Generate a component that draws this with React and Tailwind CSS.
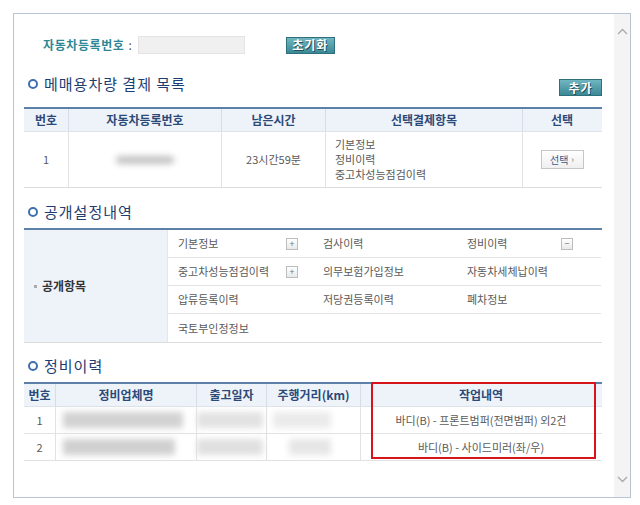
import React from 'react';

const FONT = "font-['Noto_Sans_CJK_KR','Liberation_Sans',sans-serif]";

const SectionTitle = ({ children }) => (
  <div className="flex items-center h-[20px]">
    <span className="w-[10px] h-[10px] rounded-full border-[2.5px] border-[#3f6fae] ml-[4px] mr-[6px]" />
    <span className="text-[15px] leading-[20px] tracking-[1px] text-[#1e3d70]">{children}</span>
  </div>
);

const TealButton = ({ children, className = '' }) => (
  <button
    className={`h-[17px] border border-[#2f6f7c] bg-gradient-to-b from-[#6fb6c1] to-[#3b8895] text-white text-[12px] font-bold leading-none tracking-[1px] [text-shadow:1px_1px_0_#1f4f58] ${className}`}
  >
    {children}
  </button>
);

const MiniBtn = ({ sign, className = '' }) => (
  <span className={`w-[12px] h-[12px] border border-[#bdbdbd] bg-gradient-to-b from-white to-[#e9e9e9] flex items-center justify-center text-[#777] text-[9px] leading-none ${className}`}>
    {sign}
  </span>
);

const Blob = ({ className }) => <div className={`blur-[3px] ${className}`} />;

export default function App() {
  return (
    <div className={`w-[640px] h-[505px] bg-white pt-[13px] pl-[13px] ${FONT}`}>
      <div className="w-[618px] h-[485px] border border-[#b9c4d3] flex">
        {/* content */}
        <div className="flex-1 pl-[10px] pr-[12px]">
          {/* 자동차등록번호 */}
          <div className="flex items-center h-[18px] mt-[22px]">
            <span className="ml-[19px] text-[12px] font-bold tracking-[0.6px] text-[#2e8795]">자동차등록번호</span>
            <span className="ml-[4px] text-[12px] text-[#555]">:</span>
            <div className="ml-[6px] w-[107px] h-[18px] bg-[#f0f0f0] border border-[#e4e4e4]" />
            <TealButton className="ml-[41px] w-[49px]">초기화</TealButton>
          </div>

          {/* 매매용차량 결제 목록 */}
          <div className="flex justify-between h-[22px] mt-[20px]">
            <div className="self-start"><SectionTitle>메매용차량 결제 목록</SectionTitle></div>
            <TealButton className="self-end w-[43px]">추가</TealButton>
          </div>
          <div className="mt-[11px] border-t-2 border-[#5d80a9] border-b border-b-[#dcdcdc]">
            <div className="grid grid-cols-[44px_153px_104px_197px_79px] h-[23px] bg-[#eef3fa] border-b border-[#dde3ea] text-[12px] font-bold text-[#2c4a77]">
              <div className="flex items-center justify-center">번호</div>
              <div className="flex items-center justify-center border-l border-[#d6dde7]">자동차등록번호</div>
              <div className="flex items-center justify-center border-l border-[#d6dde7]">남은시간</div>
              <div className="flex items-center justify-center border-l border-[#d6dde7]">선택결제항목</div>
              <div className="flex items-center justify-center border-l border-[#d6dde7]">선택</div>
            </div>
            <div className="grid grid-cols-[44px_153px_104px_197px_79px] h-[55px] text-[11px] text-[#5a5a5a]">
              <div className="flex items-center justify-center">1</div>
              <div className="flex items-center justify-center border-l border-[#e2e2e2]">
                <Blob className="w-[58px] h-[8px] rounded-full bg-[#c2c2c2]" />
              </div>
              <div className="flex items-center justify-center border-l border-[#e2e2e2]">23시간59분</div>
              <div className="flex flex-col justify-center pl-[9px] leading-[15px] border-l border-[#e2e2e2]">
                <span>기본정보</span>
                <span>정비이력</span>
                <span>중고차성능점검이력</span>
              </div>
              <div className="flex items-center justify-center border-l border-[#e2e2e2]">
                <span className="w-[43px] h-[19px] border border-[#c6c6c6] bg-gradient-to-b from-white to-[#efefef] flex items-center justify-center gap-[3px] text-[10px] text-[#3a5b8c]">
                  선택<span className="text-[9px] text-[#777]">›</span>
                </span>
              </div>
            </div>
          </div>

          {/* 공개설정내역 */}
          <div className="mt-[14px]"><SectionTitle>공개설정내역</SectionTitle></div>
          <div className="mt-[6px] border-t-2 border-[#5d80a9] border-b border-b-[#dcdcdc] grid grid-cols-[144px_433px] text-[11px] text-[#5a5a5a]">
            <div className="bg-[#eef3fa] flex items-center pl-[10px] border-r border-[#e3e8ef]">
              <span className="w-[3px] h-[3px] bg-[#aaa] mr-[5px]" />
              <span className="text-[12px] font-bold text-[#333]">공개항목</span>
            </div>
            <div>
              <div className="grid grid-cols-[145px_144px_144px] h-[28px] border-b border-[#e2e2e2]">
                <div className="flex items-center pl-[10px]">기본정보<MiniBtn sign="+" className="ml-auto mr-[15px]" /></div>
                <div className="flex items-center pl-[10px]">검사이력</div>
                <div className="flex items-center pl-[10px]">정비이력<MiniBtn sign="−" className="ml-auto mr-[28px]" /></div>
              </div>
              <div className="grid grid-cols-[145px_144px_144px] h-[28px] border-b border-[#e2e2e2]">
                <div className="flex items-center pl-[10px]">중고차성능점검이력<MiniBtn sign="+" className="ml-auto mr-[15px]" /></div>
                <div className="flex items-center pl-[10px]">의무보험가입정보</div>
                <div className="flex items-center pl-[10px]">자동차세체납이력</div>
              </div>
              <div className="grid grid-cols-[145px_144px_144px] h-[28px] border-b border-[#e2e2e2]">
                <div className="flex items-center pl-[10px]">압류등록이력</div>
                <div className="flex items-center pl-[10px]">저당권등록이력</div>
                <div className="flex items-center pl-[10px]">폐차정보</div>
              </div>
              <div className="grid grid-cols-[145px_144px_144px] h-[28px]">
                <div className="flex items-center pl-[10px]">국토부인정정보</div>
                <div />
                <div />
              </div>
            </div>
          </div>

          {/* 정비이력 */}
          <div className="mt-[13px]"><SectionTitle>정비이력</SectionTitle></div>
          <div className="relative mt-[6px] border-t-2 border-[#5d80a9]">
            <div className="grid grid-cols-[31px_141px_70px_94px_241px] h-[23px] bg-[#eef3fa] border-b border-[#dde3ea] text-[12px] font-bold text-[#2c4a77]">
              <div className="flex items-center justify-center">번호</div>
              <div className="flex items-center justify-center border-l border-[#d6dde7]">정비업체명</div>
              <div className="flex items-center justify-center border-l border-[#d6dde7]">출고일자</div>
              <div className="flex items-center justify-center border-l border-[#d6dde7]">주행거리(km)</div>
              <div className="flex items-center justify-center border-l border-[#d6dde7]">작업내역</div>
            </div>
            <div className="grid grid-cols-[31px_141px_70px_94px_241px] h-[27px] border-b border-[#e2e2e2] text-[11px] text-[#5a5a5a]">
              <div className="flex items-center justify-center">1</div>
              <div className="flex items-center pl-[7px] border-l border-[#e2e2e2]"><Blob className="w-[120px] h-[16px] bg-[#d2d2d2]" /></div>
              <div className="flex items-center border-l border-[#e2e2e2]"><Blob className="w-[66px] h-[16px] bg-[#e2e2e2]" /></div>
              <div className="flex items-center pl-[6px] border-l border-[#e2e2e2]"><Blob className="w-[58px] h-[16px] bg-[#ebebeb]" /></div>
              <div className="flex items-center justify-center border-l border-[#e2e2e2]">바디(B) - 프론트범퍼(전면범퍼) 외2건</div>
            </div>
            <div className="grid grid-cols-[31px_141px_70px_94px_241px] h-[27px] border-b border-[#e2e2e2] text-[11px] text-[#5a5a5a]">
              <div className="flex items-center justify-center">2</div>
              <div className="flex items-center pl-[7px] border-l border-[#e2e2e2]"><Blob className="w-[112px] h-[16px] bg-[#d0d0d0]" /></div>
              <div className="flex items-center border-l border-[#e2e2e2]"><Blob className="w-[66px] h-[16px] bg-[#e0e0e0]" /></div>
              <div className="flex items-center pl-[22px] border-l border-[#e2e2e2]"><Blob className="w-[42px] h-[16px] bg-[#e6e6e6]" /></div>
              <div className="flex items-center justify-center border-l border-[#e2e2e2]">바디(B) - 사이드미러(좌/우)</div>
            </div>
            {/* highlight box */}
            <div className="absolute left-[347px] top-[-2px] w-[225px] h-[77px] border-2 border-[#d7141a]" />
          </div>
        </div>

        {/* scrollbar */}
        <div className="w-[16px] bg-[#f4f4f4] flex flex-col justify-between items-center pt-[14px] pb-[14px]">
          <svg width="11" height="7" viewBox="0 0 11 7" fill="none" stroke="#a9a9a9" strokeWidth="1.3">
            <path d="M1 6 L5.5 1.5 L10 6" />
          </svg>
          <svg width="11" height="7" viewBox="0 0 11 7" fill="none" stroke="#a9a9a9" strokeWidth="1.3">
            <path d="M1 1 L5.5 5.5 L10 1" />
          </svg>
        </div>
      </div>
    </div>
  );
}
